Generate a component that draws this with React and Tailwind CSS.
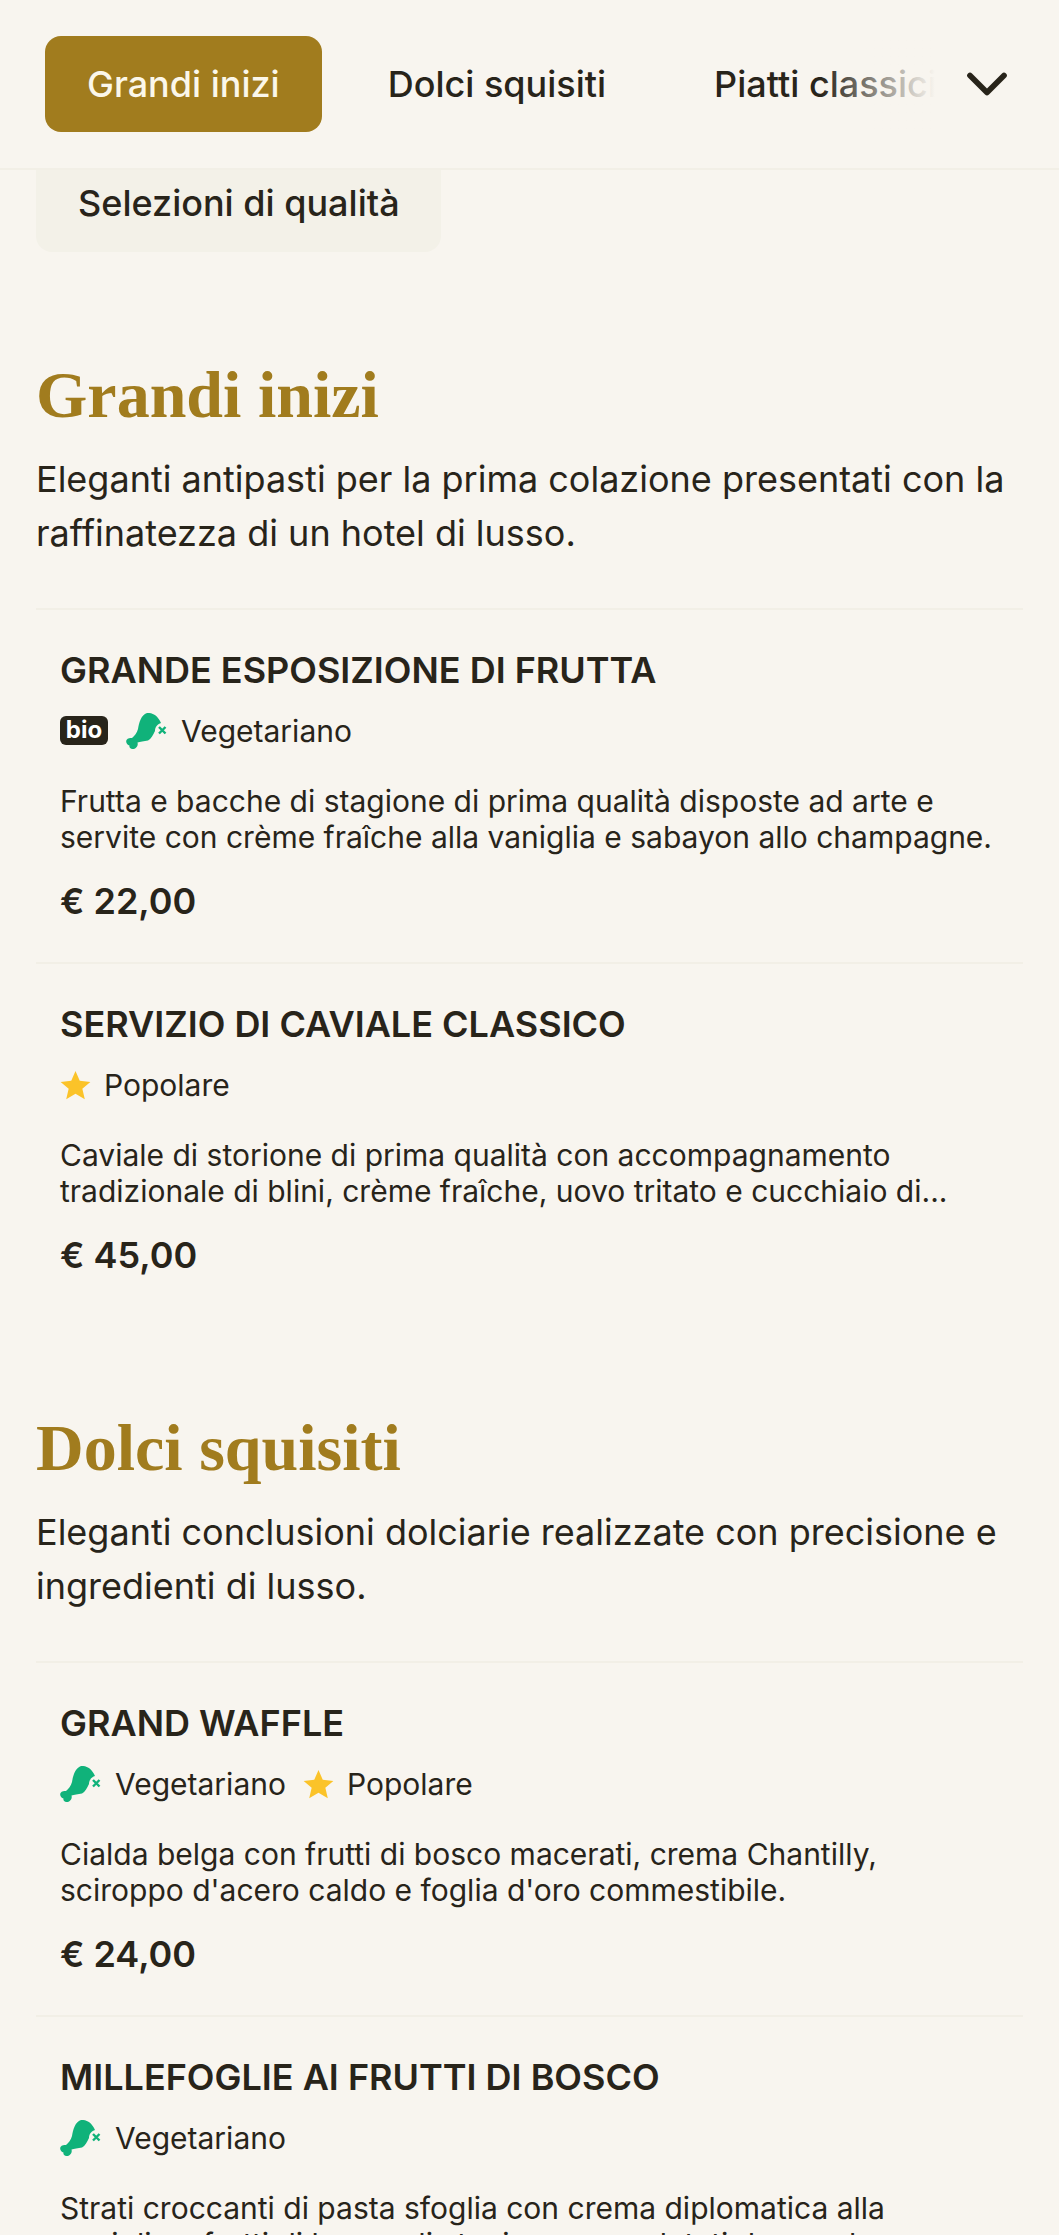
import { ChevronDown } from 'lucide-react'

const tabs = ['Grandi inizi', 'Dolci squisiti', 'Piatti classici', 'Selezioni di qualità']

const sections = [
  {
    title: 'Grandi inizi',
    intro: 'Eleganti antipasti per la prima colazione presentati con la raffinatezza di un hotel di lusso.',
    items: [
      {
        name: 'GRANDE ESPOSIZIONE DI FRUTTA',
        tags: ['bio', 'veg'],
        desc: 'Frutta e bacche di stagione di prima qualità disposte ad arte e servite con crème fraîche alla vaniglia e sabayon allo champagne.',
        price: '€ 22,00',
      },
      {
        name: 'SERVIZIO DI CAVIALE CLASSICO',
        tags: ['pop'],
        desc: 'Caviale di storione di prima qualità con accompagnamento tradizionale di blini, crème fraîche, uovo tritato e cucchiaio di...',
        price: '€ 45,00',
      },
    ],
  },
  {
    title: 'Dolci squisiti',
    intro: 'Eleganti conclusioni dolciarie realizzate con precisione e ingredienti di lusso.',
    items: [
      {
        name: 'GRAND WAFFLE',
        tags: ['veg', 'pop'],
        desc: "Cialda belga con frutti di bosco macerati, crema Chantilly, sciroppo d'acero caldo e foglia d'oro commestibile.",
        price: '€ 24,00',
      },
      {
        name: 'MILLEFOGLIE AI FRUTTI DI BOSCO',
        tags: ['veg'],
        desc: 'Strati croccanti di pasta sfoglia con crema diplomatica alla vaniglia e frutti di bosco di stagione, completati da zucchero...',
        price: '€ 26,00',
      },
    ],
  },
]

function LegIcon() {
  return (
    <svg className="w-[41px] h-[36px] shrink-0" viewBox="0 0 41 36" fill="none">
      <path
        d="M21 0C27 -.5 32 3 35 10C32 11 29 13.500 29 18C27 22 25 26 22 27.500C18 28.500 14 28.500 11.500 29.500C12.500 32.500 10 36 6.500 36C4 36 3 34 3.500 32.500C1 32 -.5 29 .5 27C2 25 4 25 6 25C8.500 23 11 20 12 16C13 10 15 2 21 0Z"
        fill="#10b27a"
      />
      <path d="M33 14L39.500 20.500M39.500 14L33 20.500" stroke="#10b27a" strokeWidth="2.400" />
    </svg>
  )
}

function StarIcon() {
  return (
    <svg className="w-[31px] h-[31px] shrink-0" viewBox="0 0 24 24" fill="#fbc329">
      <path d="M12 .8l3.300 7.600 8.200.8-6.200 5.400 1.900 8.100L12 18.400l-7.200 4.300 1.900-8.100L.5 9.200l8.200-.8z" />
    </svg>
  )
}

function Tag({ type }) {
  if (type === 'bio') {
    return (
      <span className="mr-px flex h-[29px] w-[48px] -translate-y-px items-center justify-center rounded-[6px] bg-[#28241a] text-[24px] font-bold leading-none text-white">
        bio
      </span>
    )
  }
  const veg = type === 'veg'
  return (
    <span className={`flex items-center ${veg ? 'gap-[14px]' : 'gap-[13px]'}`}>
      {veg ? <LegIcon /> : <StarIcon />}
      <span>{veg ? 'Vegetariano' : 'Popolare'}</span>
    </span>
  )
}

function MenuItem({ item }) {
  return (
    <article className="h-[354px] border-t-2 border-[#f2efe6] px-6 pt-[40px]">
      <h3 className="text-[36px] font-semibold leading-[40px]">{item.name}</h3>
      <div className="mt-[21px] flex h-[40px] items-center gap-[17px] text-[30px] leading-[40px]">
        {item.tags.map(t => <Tag key={t} type={t} />)}
      </div>
      <p className="mt-[32px] text-[30px] leading-[36px]">{item.desc}</p>
      <p className="mt-[24px] text-[36px] font-semibold leading-[44px]">{item.price}</p>
    </article>
  )
}

export default function App() {
  return (
    <div className="h-[2235px] overflow-hidden bg-[#f8f5ef] font-['Inter',sans-serif] text-[#28241a]">
      <header className="relative z-10 flex h-[170px] items-center border-b-2 border-[#f2efe6] bg-[#f8f5ef] pl-[45px] pr-[38px]">
        <div className="relative flex w-[890px] shrink-0 gap-[24px] overflow-hidden">
          {tabs.slice(0, 3).map((t, i) => (
            <button
              key={t}
              className={`h-[96px] shrink-0 rounded-[16px] px-[42px] text-[36px] font-medium whitespace-nowrap ${i === 0 ? 'bg-[#a17c1e] text-[#fbf7ea]' : ''}`}
            >
              {t}
            </button>
          ))}
          <div className="absolute right-0 top-0 h-full w-[115px] bg-gradient-to-r from-[#f8f5ef]/0 to-[#f8f5ef]" />
        </div>
        <ChevronDown className="ml-auto h-[68px] w-[68px] text-[#28241a]" strokeWidth={2} />
      </header>

      <main className="px-9">
        <div className="-mt-[16px] flex h-[98px] w-[405px] items-center rounded-[16px] bg-[#f3f1e8] px-[42px] text-[36px] font-medium whitespace-nowrap">
          {tabs[3]}
        </div>

        <div className="flex flex-col gap-[90px] pt-[101px]">
          {sections.map(s => (
            <section key={s.title}>
              <h2 className="font-['Liberation_Serif',serif] text-[66px] font-bold leading-[84px] text-[#a17c1e]">{s.title}</h2>
              <p className="mt-[15px] text-[36px] leading-[54px]">{s.intro}</p>
              <div className="mt-[48px]">
                {s.items.map(item => <MenuItem key={item.name} item={item} />)}
              </div>
            </section>
          ))}
        </div>
      </main>
    </div>
  )
}
